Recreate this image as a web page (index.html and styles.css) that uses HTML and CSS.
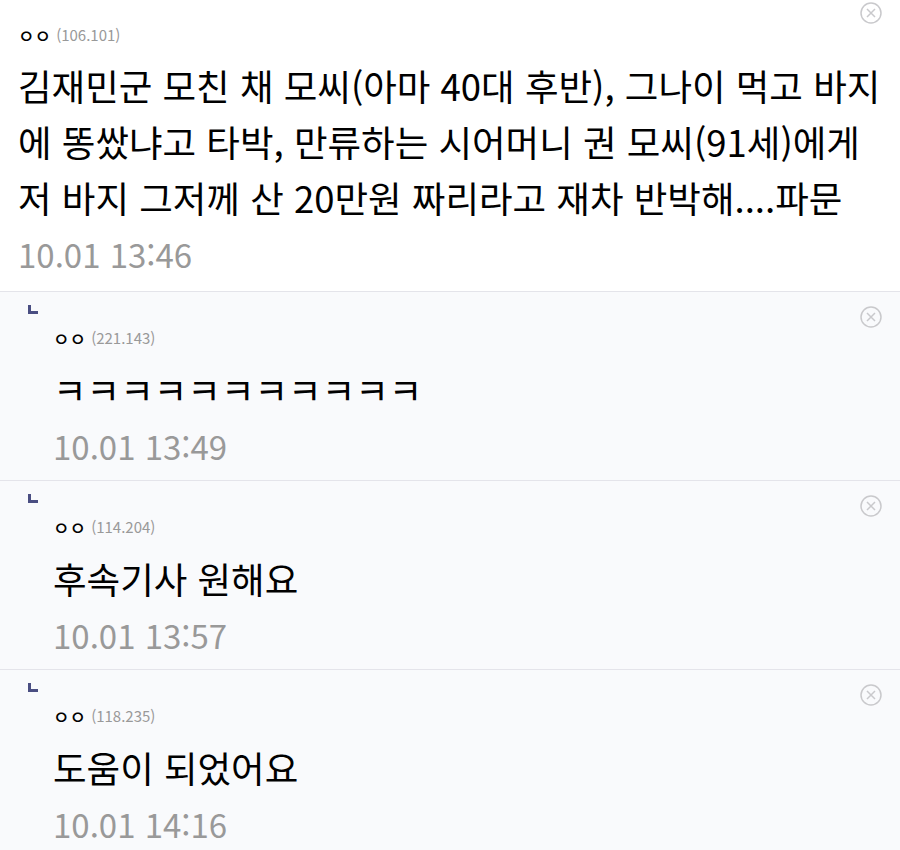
FILE: index.html
```html
<!DOCTYPE html>
<html lang="ko">
<head>
  <meta charset="UTF-8">
  <meta name="viewport" content="width=device-width, initial-scale=1.0">
  <title>댓글</title>
  <link rel="stylesheet" href="styles.css">
</head>
<body>
  <div id="comments">
    <div class="comment first">
      <div class="meta"><span class="nick">ㅇㅇ</span><span class="ip">(106.101)</span></div>
      <p class="text">김재민군 모친 채 모씨(아마 40대 후반), 그나이 먹고 바지에 똥쌌냐고 타박, 만류하는 시어머니 권 모씨(91세)에게 저 바지 그저께 산 20만원 짜리라고 재차 반박해....파문</p>
      <div class="date">10.01 13:46</div>
      <button class="del" title="삭제">
        <svg width="22" height="22" viewBox="0 0 22 22"><circle cx="11" cy="11" r="10" /><path d="M7 7 L15 15 M15 7 L7 15" /></svg>
      </button>
    </div>
    <div class="comment reply">
      <span class="mark"></span>
      <div class="meta"><span class="nick">ㅇㅇ</span><span class="ip">(221.143)</span></div>
      <p class="text">ㅋㅋㅋㅋㅋㅋㅋㅋㅋㅋㅋ</p>
      <div class="date">10.01 13:49</div>
      <button class="del" title="삭제">
        <svg width="22" height="22" viewBox="0 0 22 22"><circle cx="11" cy="11" r="10" /><path d="M7 7 L15 15 M15 7 L7 15" /></svg>
      </button>
    </div>
    <div class="comment reply">
      <span class="mark"></span>
      <div class="meta"><span class="nick">ㅇㅇ</span><span class="ip">(114.204)</span></div>
      <p class="text">후속기사 원해요</p>
      <div class="date">10.01 13:57</div>
      <button class="del" title="삭제">
        <svg width="22" height="22" viewBox="0 0 22 22"><circle cx="11" cy="11" r="10" /><path d="M7 7 L15 15 M15 7 L7 15" /></svg>
      </button>
    </div>
    <div class="comment reply">
      <span class="mark"></span>
      <div class="meta"><span class="nick">ㅇㅇ</span><span class="ip">(118.235)</span></div>
      <p class="text">도움이 되었어요</p>
      <div class="date">10.01 14:16</div>
      <button class="del" title="삭제">
        <svg width="22" height="22" viewBox="0 0 22 22"><circle cx="11" cy="11" r="10" /><path d="M7 7 L15 15 M15 7 L7 15" /></svg>
      </button>
    </div>
  </div>
</body>
</html>
```

FILE: styles.css
```css
body {
  margin: 0;
  padding: 0;
  font-family: "Noto Sans CJK KR", "Noto Sans", sans-serif;
  background-color: #fff;
  color: #000;
}
#comments {
  width: 900px;
}
.comment {
  position: relative;
  padding: 23px 10px 9px 18px;
  border-bottom: 1px solid #e4e4ea;
}
.comment.reply {
  padding: 13px 10px 6px 53px;
  background-color: #f9fafc;
}
.mark {
  display: block;
  width: 7px;
  height: 6px;
  margin-left: -25px;
  margin-bottom: 12px;
  border-left: 3px solid #4a4e82;
  border-bottom: 3px solid #4a4e82;
}
.meta {
  display: flex;
  align-items: center;
  gap: 5px;
  height: 24px;
  line-height: 24px;
}
.nick {
  font-size: 18px;
  font-weight: 500;
}
.ip {
  font-size: 15px;
  color: #999;
}
.text {
  margin: 11px 0 0;
  font-size: 36.5px;
  line-height: 56px;
}
.reply .text {
  margin-top: 12px;
}
.date {
  font-size: 33px;
  line-height: 56px;
  color: #999;
}
.del {
  position: absolute;
  top: 2px;
  right: 18px;
  padding: 0;
  border: none;
  background: none;
  cursor: pointer;
  line-height: 0;
}
.reply .del {
  top: 14px;
}
.del circle, .del path {
  fill: none;
  stroke: #c9c9cc;
  stroke-width: 1.5;
}
```
